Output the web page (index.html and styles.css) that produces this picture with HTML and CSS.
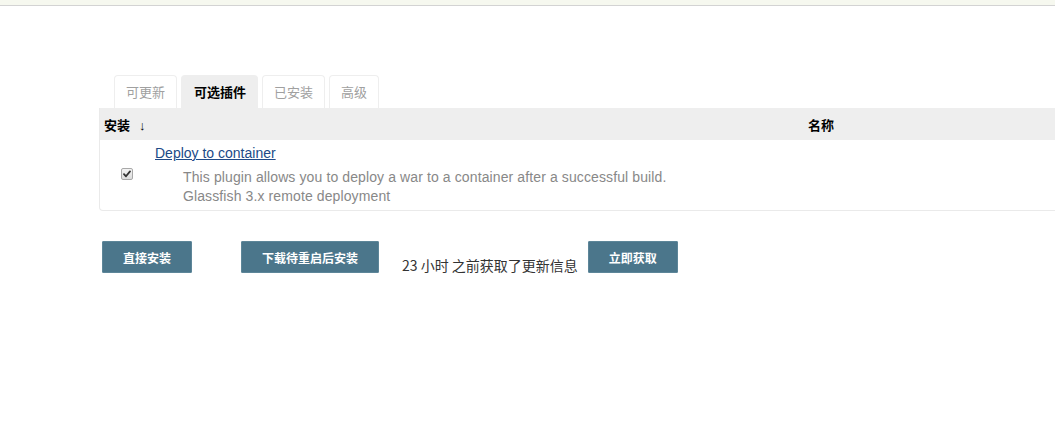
FILE: index.html
```html
<!DOCTYPE html>
<html lang="zh">
<head>
<meta charset="utf-8">
<link rel="stylesheet" href="styles.css">
</head>
<body>
<div class="topbar"></div>
<main class="content">
  <nav class="tabs">
    <span class="tab">可更新</span>
    <span class="tab active">可选插件</span>
    <span class="tab">已安装</span>
    <span class="tab">高级</span>
  </nav>
  <div class="table">
    <div class="thead">
      <div class="th th-install">安装 <span class="arrow">↓</span></div>
      <div class="th th-name">名称</div>
    </div>
    <div class="row">
      <div class="cell-check">
        <span class="checkbox"><svg width="8" height="8" viewBox="0 0 8 8"><path d="M1 4.2 L3 6.3 L7 1.4" fill="none" stroke="#333" stroke-width="1.8" stroke-linecap="round" stroke-linejoin="round"/></svg></span>
      </div>
      <div class="cell-info">
        <a class="plugin-link" href="#">Deploy to container</a>
        <div class="desc">This plugin allows you to deploy a war to a container after a successful build.<br>Glassfish 3.x remote deployment</div>
      </div>
    </div>
  </div>
  <div class="actions">
    <button class="btn btn-1">直接安装</button>
    <button class="btn btn-2">下载待重启后安装</button>
    <span class="status">23 小时 之前获取了更新信息</span>
    <button class="btn btn-3">立即获取</button>
  </div>
</main>
</body>
</html>
```

FILE: styles.css
```css
html, body {
  margin: 0;
  padding: 0;
  background: #fff;
  font-family: "Liberation Sans", "Noto Sans CJK SC", sans-serif;
  font-size: 14px;
  color: #333;
}
.topbar {
  height: 5px;
  background: #f6f8ef;
  border-bottom: 1px solid #d3d3d3;
}
.content {
  padding: 69px 0 0 99px;
}
.tabs {
  display: flex;
  gap: 4px;
  padding-left: 15px;
  height: 33px;
}
.tab {
  box-sizing: border-box;
  height: 33px;
  padding: 0 11px;
  border: 1px solid #eeeeee;
  border-bottom: none;
  border-radius: 4px 4px 0 0;
  color: #a0a0a0;
  font-family: "Noto Sans CJK SC", sans-serif;
  font-size: 13px;
  line-height: 32px;
}
.tab.active {
  background: #eeeeee;
  color: #000;
  font-weight: bold;
  padding: 0 11px 0 12px;
}
.table {
  border: 1px solid #eaeaea;
  border-top: none;
  border-right: none;
  border-radius: 0 0 0 4px;
}
.thead {
  display: flex;
  height: 32px;
  align-items: center;
  background: #eeeeee;
  font-family: "Noto Sans CJK SC", sans-serif;
  font-weight: bold;
  font-size: 13px;
  color: #000;
}
.th-install {
  width: 704px;
  padding-left: 4px;
}
.arrow {
  font-family: "Liberation Sans", sans-serif;
  font-weight: normal;
  margin-left: 6px;
}
.row {
  display: flex;
  height: 70px;
}
.cell-check {
  width: 55px;
  display: flex;
  align-items: center;
  justify-content: center;
  padding-bottom: 3px;
  box-sizing: border-box;
}
.checkbox {
  box-sizing: border-box;
  width: 12px;
  height: 12px;
  border: 1px solid #a8a8a8;
  border-radius: 2px;
  background: linear-gradient(#f4f4f4, #dcdcdc);
  display: flex;
  align-items: center;
  justify-content: center;
  margin-left: -2px;
}
.cell-info {
  padding-top: 4px;
}
.plugin-link {
  color: #204a87;
  text-decoration: underline;
  font-size: 14px;
  line-height: 18px;
}
.desc {
  margin-top: 6px;
  padding-left: 28px;
  color: #888;
  font-size: 14px;
  line-height: 19px;
  letter-spacing: 0.11px;
}
.actions {
  display: flex;
  align-items: flex-start;
  margin-top: 30px;
  padding-left: 3px;
}
.btn {
  box-sizing: border-box;
  height: 32px;
  background: #4b768b;
  border: 1px solid #5d8699;
  border-radius: 1px;
  color: #fff;
  font-family: "Noto Sans CJK SC", sans-serif;
  font-weight: bold;
  font-size: 12px;
  padding: 0;
}
.btn-1 { width: 90px; }
.btn-2 { width: 138px; margin-left: 49px; }
.btn-3 { width: 90px; margin-left: 10px; }
.status {
  margin-left: 23px;
  margin-top: 15px;
  font-family: "Noto Sans CJK SC", sans-serif;
  font-size: 14px;
  color: #333;
  line-height: 19px;
}
```
